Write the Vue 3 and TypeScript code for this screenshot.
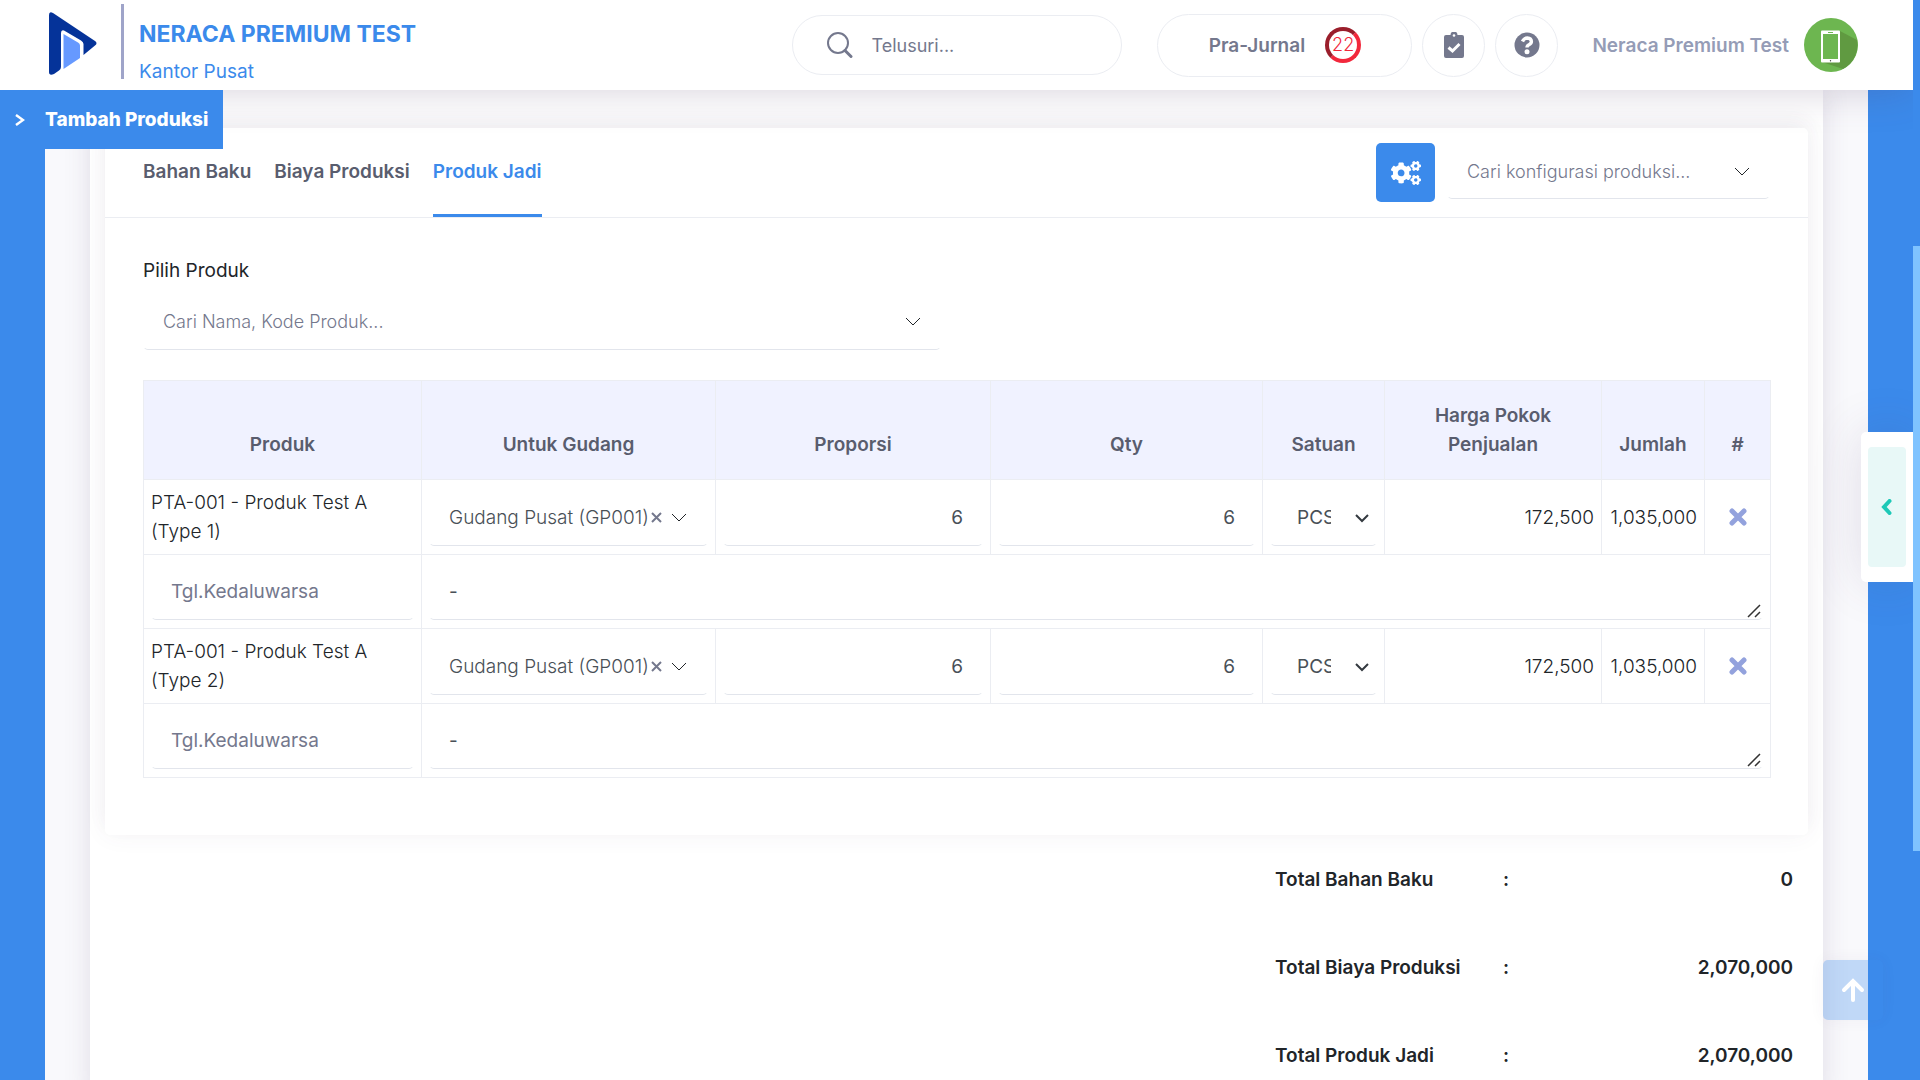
<script setup lang="ts">
import { ref } from 'vue'

interface Row {
  product: string
  variant: string
  warehouse: string
  proportion: string
  qty: string
  unit: string
  cost: string
  total: string
  expiry: string
  note: string
}

const tabs = ['Bahan Baku', 'Biaya Produksi', 'Produk Jadi']
const activeTab = ref('Produk Jadi')
const search = ref('')
const config = ref('')
const product = ref('')

const makeRow = (type: number): Row => ({
  product: 'PTA-001 - Produk Test A',
  variant: `(Type ${type})`,
  warehouse: 'Gudang Pusat (GP001)',
  proportion: '6',
  qty: '6',
  unit: 'PCS',
  cost: '172,500',
  total: '1,035,000',
  expiry: '',
  note: '-',
})
const rows = ref<Row[]>([makeRow(1), makeRow(2)])

const totals = [
  { label: 'Total Bahan Baku', value: '0' },
  { label: 'Total Biaya Produksi', value: '2,070,000' },
  { label: 'Total Produk Jadi', value: '2,070,000' },
]
</script>

<template>
  <div class="shell">
    <header class="topbar">
      <svg class="logo" viewBox="0 0 48 63" aria-hidden="true">
        <path d="M0 3Q0 -1 4 1L46 29Q49 31 46 33.500L34.500 43V32Q34.500 30 32 28.500L15 18.500Q12 17.500 12 21V55Q12 57 10 58.500L5 62Q0 64 0 60Z" fill="#053399" />
        <path d="M14.500 22L29 30.500Q31 31.500 31 33.500V46L14.500 57Z" fill="#6699ff" />
      </svg>
      <span class="divider"></span>
      <div class="brand">
        <strong class="company">NERACA PREMIUM TEST</strong>
        <span class="branch">Kantor Pusat</span>
      </div>
      <label class="search">
        <svg width="26" height="26" viewBox="0 0 26 26" fill="none" stroke="#74788d" stroke-width="2" stroke-linecap="round">
          <circle cx="11" cy="11" r="10" />
          <path d="M18 18.500L24 24.500" stroke-width="3" />
        </svg>
        <input v-model="search" type="search" placeholder="Telusuri..." aria-label="Telusuri" />
      </label>
      <button class="journal" type="button">
        <span>Pra-Jurnal</span>
        <span class="ring">22</span>
      </button>
      <button class="round" type="button" aria-label="Tugas">
        <svg width="20" height="26" viewBox="0 0 20 26">
          <path d="M2 3H6.500A3.500 3.500 0 0 1 13.500 3H18Q20 3 20 5V24Q20 26 18 26H2Q0 26 0 24V5Q0 3 2 3Z" fill="#74788d" />
          <circle cx="10" cy="3.500" r="1.300" fill="#fff" />
          <path d="M4.500 15.500L8.500 19L15.500 12" fill="none" stroke="#fff" stroke-width="3" />
        </svg>
      </button>
      <button class="round" type="button" aria-label="Bantuan">
        <svg width="26" height="26" viewBox="0 0 26 26">
          <circle cx="13" cy="13" r="12.500" fill="#74788d" />
          <path d="M8.500 9.500Q10 6 13.200 6Q17.400 6.400 17.400 9.600Q17.400 11.600 15 12.700Q13 13.600 13 15.400" fill="none" stroke="#fff" stroke-width="3.400" />
          <circle cx="13" cy="19.800" r="2.500" fill="#fff" />
        </svg>
      </button>
      <a class="user" href="#">
        <span>Neraca Premium Test</span>
        <svg width="54" height="54" viewBox="0 0 54 54" aria-hidden="true">
          <circle cx="27" cy="27" r="27" fill="#6db650" />
          <path d="M36 13L53 22A27 27 0 0 1 39 51L18 44Z" fill="#609a41" />
          <rect x="17" y="12.500" width="19" height="32" rx="1" fill="#fff" />
          <rect x="19" y="16" width="15" height="25" fill="#6db650" />
          <path d="M24 14.500H29" stroke="#6db650" />
          <circle cx="26.500" cy="42.800" r="0.700" fill="#444" />
        </svg>
      </a>
    </header>

    <a class="crumb" href="#">
      <svg width="10" height="12" viewBox="0 0 10 12" fill="none" stroke="#fff" stroke-width="2.500"><path d="M1 1L8 6L1 11" /></svg>
      <span>Tambah Produksi</span>
    </a>

    <div class="page">
      <main class="sheet">
        <section class="card">
          <div class="card-head">
            <nav class="tabs">
              <button v-for="tab in tabs" :key="tab" type="button" class="tab" :class="{ active: tab === activeTab }" @click="activeTab = tab">{{ tab }}</button>
            </nav>
            <button class="gear" type="button" aria-label="Konfigurasi produksi">
              <svg width="30" height="24" viewBox="0 0 640 512" fill="#fff">
                <path d="M512.1 191l-8.2 14.3c-3 5.3-9.400 7.500-15.100 5.400-11.800-4.400-22.600-10.700-32.100-18.600-4.600-3.800-5.800-10.500-2.800-15.700l8.200-14.300c-6.900-8-12.300-17.300-15.900-27.400h-16.500c-6 0-11.200-4.300-12.200-10.300-2-12-2.100-24.600 0-37.100 1-6 6.200-10.400 12.200-10.400h16.500c3.600-10.100 9-19.400 15.900-27.400l-8.200-14.300c-3-5.200-1.900-11.900 2.800-15.700 9.500-7.900 20.400-14.200 32.100-18.600 5.700-2.100 12.100.1 15.100 5.400l8.200 14.300c10.500-1.900 21.200-1.900 31.700 0L552 6.300c3-5.300 9.400-7.500 15.100-5.400 11.800 4.400 22.600 10.700 32.100 18.600 4.600 3.800 5.800 10.500 2.800 15.700l-8.200 14.300c6.900 8 12.300 17.300 15.900 27.400h16.500c6 0 11.200 4.300 12.200 10.300 2 12 2.100 24.600 0 37.100-1 6-6.200 10.400-12.200 10.400h-16.500c-3.600 10.100-9 19.400-15.900 27.400l8.200 14.300c3 5.200 1.900 11.900-2.800 15.700-9.500 7.900-20.400 14.200-32.100 18.600-5.700 2.100-12.100-.1-15.100-5.400l-8.200-14.300c-10.400 1.900-21.200 1.900-31.700 0zm-10.500-58.800c38.500 29.600 82.400-14.300 52.800-52.800-38.500-29.700-82.400 14.300-52.800 52.800zM386.300 286.100l33.700 16.800c10.100 5.800 14.500 18.100 10.500 29.100-8.900 24.200-26.400 46.400-42.600 65.800-7.400 8.900-20.200 11.100-30.300 5.300l-29.100-16.800c-16 13.700-34.600 24.600-54.900 31.700v33.600c0 11.600-8.300 21.600-19.700 23.600-24.600 4.200-50.400 4.400-75.900 0-11.500-2-20-11.900-20-23.600V418c-20.300-7.200-38.900-18-54.900-31.700L74 403c-10 5.800-22.900 3.600-30.300-5.300-16.200-19.400-33.300-41.600-42.200-65.700-4-10.900.4-23.200 10.500-29.100l33.300-16.800c-3.900-20.900-3.900-42.400 0-63.400L12 205.800c-10.100-5.800-14.600-18.100-10.500-29 8.900-24.200 26-46.400 42.200-65.800 7.400-8.900 20.200-11.100 30.300-5.300l29.100 16.800c16-13.700 34.600-24.600 54.900-31.700V57.100c0-11.500 8.200-21.500 19.600-23.500 24.600-4.200 50.500-4.400 76-.1 11.500 2 20 11.900 20 23.600v33.600c20.300 7.200 38.900 18 54.900 31.700l29.100-16.800c10-5.800 22.900-3.600 30.300 5.300 16.200 19.400 33.200 41.600 42.100 65.800 4 10.900.1 23.200-10 29.100l-33.700 16.800c3.900 21 3.900 42.500 0 63.500zm-117.600 21.100c59.200-77-28.700-164.900-105.700-105.700-59.200 77 28.700 164.900 105.700 105.700zm243.400 182.700l-8.200 14.300c-3 5.300-9.400 7.500-15.100 5.400-11.800-4.400-22.600-10.700-32.100-18.600-4.600-3.800-5.800-10.500-2.800-15.700l8.200-14.300c-6.900-8-12.300-17.300-15.900-27.400h-16.500c-6 0-11.200-4.300-12.200-10.300-2-12-2.100-24.600 0-37.100 1-6 6.200-10.400 12.200-10.400h16.500c3.600-10.100 9-19.400 15.900-27.400l-8.200-14.300c-3-5.200-1.900-11.900 2.800-15.700 9.500-7.900 20.400-14.200 32.100-18.600 5.700-2.100 12.100.1 15.100 5.400l8.200 14.300c10.500-1.900 21.200-1.900 31.700 0l8.200-14.300c3-5.300 9.400-7.500 15.100-5.400 11.800 4.400 22.600 10.700 32.100 18.600 4.600 3.800 5.800 10.500 2.800 15.700l-8.200 14.300c6.900 8 12.300 17.300 15.900 27.400h16.500c6 0 11.200 4.300 12.200 10.300 2 12 2.100 24.600 0 37.100-1 6-6.200 10.400-12.200 10.400h-16.500c-3.600 10.100-9 19.400-15.900 27.400l8.200 14.300c3 5.200 1.900 11.900-2.800 15.700-9.500 7.900-20.400 14.200-32.100 18.600-5.700 2.100-12.100-.1-15.100-5.400l-8.200-14.300c-10.400 1.900-21.200 1.900-31.700 0zM501.600 431c38.500 29.600 82.400-14.300 52.800-52.800-38.500-29.600-82.400 14.300-52.800 52.800z" />
              </svg>
            </button>
            <div class="field combo config">
              <input v-model="config" class="light" placeholder="Cari konfigurasi produksi..." aria-label="Cari konfigurasi produksi" />
              <svg class="caret" width="16" height="9" viewBox="0 0 16 9"><path d="M1 1L8 8L15 1" /></svg>
            </div>
          </div>

          <div class="card-body">
            <label class="pick-label" for="pick">Pilih Produk</label>
            <div class="field combo pick">
              <input id="pick" v-model="product" class="light" placeholder="Cari Nama, Kode Produk..." />
              <svg class="caret" width="16" height="9" viewBox="0 0 16 9"><path d="M1 1L8 8L15 1" /></svg>
            </div>

            <table>
              <colgroup>
                <col class="c-product" /><col class="c-warehouse" /><col class="c-proportion" /><col class="c-qty" />
                <col class="c-unit" /><col class="c-cost" /><col class="c-total" /><col class="c-action" />
              </colgroup>
              <thead>
                <tr>
                  <th>Produk</th><th>Untuk Gudang</th><th>Proporsi</th><th>Qty</th>
                  <th>Satuan</th><th>Harga Pokok<br />Penjualan</th><th>Jumlah</th><th>#</th>
                </tr>
              </thead>
              <tbody>
                <template v-for="(row, i) in rows" :key="i">
                  <tr>
                    <td>{{ row.product }} <span class="variant">{{ row.variant }}</span></td>
                    <td>
                      <div class="field combo">
                        <select v-model="row.warehouse" class="light" aria-label="Untuk Gudang"><option>Gudang Pusat (GP001)</option></select>
                        <button class="clear" type="button" aria-label="Hapus gudang">
                          <svg width="11" height="11" viewBox="0 0 11 11"><path d="M1 1L10 10M10 1L1 10" /></svg>
                        </button>
                        <svg class="caret" width="16" height="9" viewBox="0 0 16 9"><path d="M1 1L8 8L15 1" /></svg>
                      </div>
                    </td>
                    <td><input v-model="row.proportion" class="field number" aria-label="Proporsi" /></td>
                    <td><input v-model="row.qty" class="field number" aria-label="Qty" /></td>
                    <td>
                      <div class="unit">
                        <select v-model="row.unit" class="field" aria-label="Satuan"><option>PCS</option></select>
                        <svg width="14" height="10" viewBox="0 0 14 10"><path d="M1 2L7 8L13 2" /></svg>
                      </div>
                    </td>
                    <td class="amount">{{ row.cost }}</td>
                    <td class="amount">{{ row.total }}</td>
                    <td class="action">
                      <button type="button" aria-label="Hapus baris">
                        <svg width="18" height="18" viewBox="0 0 18 18"><path d="M3 3L15 15M15 3L3 15" /></svg>
                      </button>
                    </td>
                  </tr>
                  <tr class="extra">
                    <td><input v-model="row.expiry" class="field" placeholder="Tgl.Kedaluwarsa" aria-label="Tgl.Kedaluwarsa" /></td>
                    <td colspan="7">
                      <div class="note">
                        <textarea v-model="row.note" class="field" rows="1" aria-label="Catatan"></textarea>
                        <svg width="14" height="14" viewBox="0 0 14 14"><path d="M1 13L13 1M8 13L13 8" /></svg>
                      </div>
                    </td>
                  </tr>
                </template>
              </tbody>
            </table>
          </div>
        </section>

        <dl class="totals">
          <div v-for="t in totals" :key="t.label">
            <dt>{{ t.label }}</dt>
            <dd>:</dd>
            <dd>{{ t.value }}</dd>
          </div>
        </dl>
      </main>
    </div>

    <button class="to-top" type="button" aria-label="Ke atas">
      <svg width="24" height="24" viewBox="0 0 24 24"><path d="M12 22V4M3 12L12 3L21 12" /></svg>
    </button>
    <aside class="drawer">
      <button type="button" aria-label="Buka panel">
        <svg width="12" height="16" viewBox="0 0 12 16"><path d="M8.500 2L3 8L8.500 14" /></svg>
      </button>
    </aside>
    <div class="scroll-track" aria-hidden="true"><div class="scroll-thumb"></div></div>
  </div>
</template>

<style>
html,
body {
  margin: 0;
  background: #3b8aeb;
}
</style>

<style scoped>
.shell,
.shell * {
  box-sizing: border-box;
}
.shell {
  position: relative;
  height: 100vh;
  overflow: hidden;
  font-family: Inter, Roboto, sans-serif;
  font-size: 19px;
  line-height: 29px;
  color: #212529;
  background: #3b8aeb;
}
button,
input,
select,
textarea {
  font: inherit;
  color: inherit;
  background: none;
  border: 0;
  margin: 0;
  padding: 0;
  outline: 0;
}
a {
  text-decoration: none;
}
svg {
  display: block;
  flex: none;
}

.topbar {
  position: relative;
  z-index: 3;
  display: flex;
  align-items: center;
  height: 90px;
  margin-right: 7px;
  padding: 0 55px 0 49px;
  background: #fff;
  box-shadow: 0 0 40px rgba(82, 63, 105, 0.25);
}
.logo {
  width: 48px;
  height: 63px;
  margin-bottom: 3px;
}
.divider {
  width: 3px;
  height: 75px;
  margin: 0 15px 8px 24px;
  background: #9fa4c9;
}
.brand {
  display: flex;
  flex-direction: column;
  gap: 8px;
  padding-top: 14px;
  color: #3b8aeb;
}
.company {
  font-size: 23px;
  font-weight: 700;
  line-height: 30px;
}
.search {
  display: flex;
  align-items: center;
  gap: 18px;
  width: 330px;
  height: 60px;
  margin: 0 35px 0 auto;
  padding: 0 34px;
  border: 1px solid #ebedf2;
  border-radius: 30px;
}
.search input {
  flex: 1;
  min-width: 0;
  font-size: 18px;
}
.search input::placeholder {
  color: #74788d;
  opacity: 1;
}
.journal {
  display: flex;
  align-items: center;
  justify-content: center;
  gap: 20px;
  width: 255px;
  height: 63px;
  border: 1px solid #ebedf2;
  border-radius: 32px;
  font-weight: 600;
  color: #74788d;
}
.ring {
  width: 36px;
  height: 36px;
  border: 4px solid #f2283c;
  border-top-color: #9a1e2b;
  border-left-color: #9a1e2b;
  border-radius: 50%;
  font-size: 18px;
  font-weight: 300;
  line-height: 28px;
  color: #f2283c;
}
.round {
  display: flex;
  align-items: center;
  justify-content: center;
  width: 63px;
  height: 63px;
  margin-left: 10px;
  border: 1px solid #ebedf2;
  border-radius: 50%;
}
.user {
  display: flex;
  align-items: center;
  gap: 15px;
  margin-left: 34px;
  font-weight: 600;
  color: #959cb6;
}

.crumb {
  position: absolute;
  z-index: 4;
  top: 90px;
  left: 0;
  display: flex;
  align-items: center;
  gap: 20px;
  height: 59px;
  padding: 0 15px;
  font-weight: 800;
  color: #fff;
  background: #3b8aeb;
}

.page {
  height: calc(100vh - 90px);
  margin: 0 52px 0 45px;
  padding: 0 45px;
  background: #f9f9fc;
  overflow: hidden;
}
.sheet {
  min-height: 100%;
  padding: 38px 15px 0;
  background: #fff;
  box-shadow: 0 0 25px rgba(82, 63, 105, 0.15);
}
.card {
  border-radius: 5px;
  background: #fff;
  box-shadow: 0 0 25px rgba(82, 63, 105, 0.06), 0 -10px 20px rgba(82, 63, 105, 0.05);
}
.card-head {
  display: flex;
  align-items: flex-start;
  height: 90px;
  padding: 15px 38px 0;
  border-bottom: 1px solid #ebedf2;
}
.tabs {
  display: flex;
  align-self: stretch;
  gap: 23px;
  margin-right: auto;
}
.tab {
  padding: 14px 0 28px;
  border-bottom: 3px solid transparent;
  font-weight: 600;
  color: #595d6e;
}
.tab.active {
  color: #3b8aeb;
  border-bottom-color: #3b8aeb;
}
.gear {
  display: flex;
  align-items: center;
  justify-content: center;
  width: 59px;
  height: 59px;
  margin-right: 12px;
  border-radius: 5px;
  background: #3b8aeb;
}

.field {
  display: block;
  width: 100%;
  height: 58px;
  padding: 0 19px;
  border: 1px solid transparent;
  border-bottom-color: #e2e5ec;
  border-radius: 5px;
  color: #495057;
}
.field::placeholder,
.combo input::placeholder {
  color: #74788d;
  opacity: 1;
}
.light {
  font-weight: 300;
}
.combo {
  display: flex;
  align-items: center;
}
.combo input,
.combo select {
  flex: 1;
  min-width: 0;
  appearance: none;
}
.combo input {
  font-size: 18px;
}
.caret {
  fill: none;
  stroke: #212529;
}
.config {
  width: 323px;
  height: 56px;
}
.card-body {
  padding: 38px 37px 57px 38px;
}
.pick-label {
  display: block;
  margin-bottom: 7px;
}
.pick {
  width: 49%;
}

table {
  width: 100%;
  margin-top: 30px;
  border-collapse: collapse;
  table-layout: fixed;
  font-weight: 300;
}
.c-product { width: 278px; }
.c-warehouse { width: 294px; }
.c-proportion { width: 275px; }
.c-qty { width: 272px; }
.c-unit { width: 122px; }
.c-cost { width: 217px; }
.c-total { width: 103px; }
.c-action { width: 66px; }
th,
td {
  padding: 8px 7px;
  border: 1px solid #ebedf2;
}
th {
  padding: 20px 7px;
  vertical-align: bottom;
  font-weight: 600;
  color: #595d6e;
  background: #f0f2ff;
}
.variant {
  white-space: nowrap;
}
td .field {
  font-weight: 400;
}
td .combo {
  padding-right: 20px;
}
.clear {
  margin-right: 9px;
}
.clear path {
  fill: none;
  stroke: #74788d;
  stroke-width: 2;
}
.number {
  text-align: right;
}
.unit {
  position: relative;
}
.unit select {
  padding: 0 45px 0 26px;
  appearance: none;
}
.unit svg {
  position: absolute;
  top: 25px;
  right: 8px;
  fill: none;
  stroke: #343a40;
  stroke-width: 2;
  pointer-events: none;
}
.amount {
  text-align: right;
}
.action button {
  display: block;
  margin: 0 auto;
}
.action path {
  fill: none;
  stroke: #93a2dd;
  stroke-width: 5;
  stroke-linecap: round;
}
.extra .field {
  height: 57px;
}
.note {
  position: relative;
}
.note textarea {
  padding: 13px 19px;
  resize: none;
}
.note svg {
  position: absolute;
  right: 2px;
  bottom: 2px;
  fill: none;
  stroke: #333;
  stroke-width: 1.5;
  pointer-events: none;
}

.totals {
  width: 518px;
  margin: 0 15px 0 auto;
  font-weight: 600;
}
.totals div {
  display: flex;
  align-items: center;
  height: 88px;
}
.totals dt {
  width: 228px;
}
.totals dd {
  margin: 0;
}
.totals dd:last-child {
  margin-left: auto;
}

.to-top {
  position: absolute;
  right: 37px;
  bottom: 60px;
  display: flex;
  align-items: center;
  justify-content: center;
  width: 60px;
  height: 60px;
  border-radius: 5px;
  background: rgba(59, 138, 235, 0.3);
  box-shadow: 0 0 15px rgba(82, 63, 105, 0.05);
}
.to-top path {
  fill: none;
  stroke: #fff;
  stroke-width: 4;
  stroke-linecap: round;
}
.drawer {
  position: absolute;
  z-index: 2;
  top: 40%;
  right: 7px;
  width: 52px;
  padding: 15px 7px;
  border-radius: 5px 0 0 5px;
  background: #fff;
  box-shadow: 0 0 50px rgba(82, 63, 105, 0.15);
}
.drawer button {
  display: flex;
  align-items: center;
  justify-content: center;
  width: 38px;
  height: 120px;
  border-radius: 4px;
  background: #e8f8f7;
}
.drawer path {
  fill: none;
  stroke: #1dc9b7;
  stroke-width: 4;
  stroke-linecap: round;
}
.scroll-track {
  position: absolute;
  z-index: 5;
  top: 0;
  right: 0;
  width: 7px;
  height: 100%;
  padding-top: 246px;
  background: #3b8aeb;
}
.scroll-thumb {
  height: 56vh;
  background: #7fc3ff;
}
</style>
